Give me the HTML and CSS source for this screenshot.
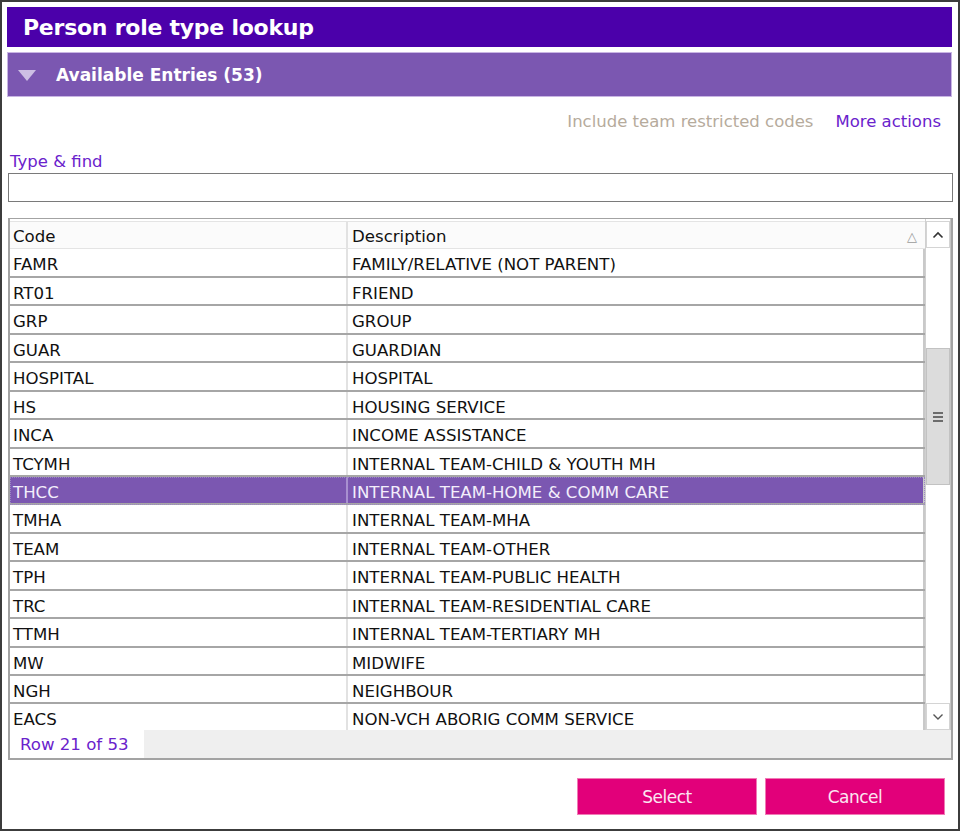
FILE: index.html
```html
<!DOCTYPE html>
<html lang="en">
<head>
  <meta charset="UTF-8" />
  <title>Person role type lookup</title>
  <link rel="stylesheet" href="styles.css">
</head>
<body>
  <div class="dialog">
    <h1 class="title">Person role type lookup</h1>

    <div class="section-head">
      <span class="caret"></span>
      <span>Available Entries (53)</span>
    </div>

    <div class="toolbar">
      <span class="muted">Include team restricted codes</span>
      <a class="link" href="#">More actions</a>
    </div>

    <label class="find-label" for="find">Type &amp; find</label>
    <input class="find-input" id="find" type="text" />

    <div class="grid">
      <div class="grid-main">
        <div class="grid-head">
          <div class="cell code">Code</div>
          <div class="cell desc">Description <span class="sort">&#9651;</span></div>
        </div>
        <div class="grid-body">
          <div class="row"><div class="cell code">FAMR</div><div class="cell desc">FAMILY/RELATIVE (NOT PARENT)</div></div>
          <div class="row"><div class="cell code">RT01</div><div class="cell desc">FRIEND</div></div>
          <div class="row"><div class="cell code">GRP</div><div class="cell desc">GROUP</div></div>
          <div class="row"><div class="cell code">GUAR</div><div class="cell desc">GUARDIAN</div></div>
          <div class="row"><div class="cell code">HOSPITAL</div><div class="cell desc">HOSPITAL</div></div>
          <div class="row"><div class="cell code">HS</div><div class="cell desc">HOUSING SERVICE</div></div>
          <div class="row"><div class="cell code">INCA</div><div class="cell desc">INCOME ASSISTANCE</div></div>
          <div class="row"><div class="cell code">TCYMH</div><div class="cell desc">INTERNAL TEAM-CHILD &amp; YOUTH MH</div></div>
          <div class="row selected"><div class="cell code">THCC</div><div class="cell desc">INTERNAL TEAM-HOME &amp; COMM CARE</div></div>
          <div class="row"><div class="cell code">TMHA</div><div class="cell desc">INTERNAL TEAM-MHA</div></div>
          <div class="row"><div class="cell code">TEAM</div><div class="cell desc">INTERNAL TEAM-OTHER</div></div>
          <div class="row"><div class="cell code">TPH</div><div class="cell desc">INTERNAL TEAM-PUBLIC HEALTH</div></div>
          <div class="row"><div class="cell code">TRC</div><div class="cell desc">INTERNAL TEAM-RESIDENTIAL CARE</div></div>
          <div class="row"><div class="cell code">TTMH</div><div class="cell desc">INTERNAL TEAM-TERTIARY MH</div></div>
          <div class="row"><div class="cell code">MW</div><div class="cell desc">MIDWIFE</div></div>
          <div class="row"><div class="cell code">NGH</div><div class="cell desc">NEIGHBOUR</div></div>
          <div class="row"><div class="cell code">EACS</div><div class="cell desc">NON-VCH ABORIG COMM SERVICE</div></div>
        </div>
      </div>
      <div class="scrollbar">
        <div class="sb-btn">
          <svg width="12" height="8" viewBox="0 0 12 8"><path d="M1.5 6.5 L6 2 L10.5 6.5" fill="none" stroke="#333" stroke-width="1.6"/></svg>
        </div>
        <div class="sb-track">
          <div class="sb-thumb"><span class="grip"></span></div>
        </div>
        <div class="sb-btn">
          <svg width="12" height="8" viewBox="0 0 12 8"><path d="M1.5 1.5 L6 6 L10.5 1.5" fill="none" stroke="#555" stroke-width="1.4"/></svg>
        </div>
      </div>
      <div class="grid-foot">
        <span class="row-count">Row 21 of 53</span>
      </div>
    </div>

    <div class="actions">
      <button class="btn">Select</button>
      <button class="btn">Cancel</button>
    </div>
  </div>
</body>
</html>
```

FILE: styles.css
```css
* {
  box-sizing: border-box;
}

body {
  margin: 0;
  padding: 0;
  font-family: "DejaVu Sans", Verdana, sans-serif;
  background: #fff;
  color: #111;
}

.dialog {
  width: 960px;
  height: 831px;
  border: 2px solid #3c3c3c;
  padding: 5px 6px 0 5px;
}

.title {
  margin: 0;
  height: 40px;
  background: #4b00aa;
  color: #fff;
  font-size: 22px;
  font-weight: bold;
  line-height: 38px;
  padding-top: 2px;
  padding-left: 16px;
  letter-spacing: -0.25px;
}

.section-head {
  margin-top: 5px;
  height: 45px;
  background: #7b57b1;
  border: 1px solid #c8b5e3;
  color: #fff;
  font-size: 17px;
  font-weight: bold;
  display: flex;
  align-items: center;
  padding-left: 10px;
  padding-top: 1px;
}

.caret {
  width: 0;
  height: 0;
  border-left: 9px solid transparent;
  border-right: 9px solid transparent;
  border-top: 11px solid #cdbfe4;
  margin-right: 20px;
}

.toolbar {
  margin-top: 15px;
  display: flex;
  justify-content: flex-end;
  gap: 22px;
  font-size: 16.5px;
  line-height: 20px;
  padding-right: 11px;
}

.muted {
  color: #b6ab9c;
}

.link {
  color: #6a22cc;
  text-decoration: none;
}

.find-label {
  display: block;
  margin-top: 20px;
  margin-left: 3px;
  color: #6a22cc;
  font-size: 16.5px;
  line-height: 20px;
}

.find-input {
  display: block;
  margin-left: 1px;
  width: 945px;
  height: 29px;
  border: 1px solid #7a7a7a;
  margin-top: 1px;
}

.grid {
  margin-top: 16px;
  margin-left: 1px;
  width: 945px;
  height: 542px;
  border: 2px solid #a3a3a3;
  border-top-width: 1px;
  display: grid;
  grid-template-columns: 915px 26px;
  grid-template-rows: 511px 28px;
  font-size: 16.6px;
}

.grid-main {
  overflow: hidden;
  padding-top: 2px;
}

.grid-head,
.row {
  display: flex;
  height: 28.44px;
}

.grid-head {
  background: #fbfbfb;
  border-bottom: 1px solid #e4e4e4;
  border-top: 1px solid #e4e4e4;
}

.cell {
  padding-left: 3px;
  line-height: 27px;
  white-space: nowrap;
}

.grid-head .cell {
  padding-top: 1px;
}

.cell.code {
  width: 338px;
  border-right: 2px solid #e2e2e2;
}

.cell.desc {
  flex: 1;
  padding-left: 4px;
  display: flex;
}

.sort {
  margin-left: auto;
  margin-right: 8px;
  color: #9a9a9a;
  font-size: 13px;
}

.row {
  border-bottom: 2px solid #a6a6a6;
}

.row .cell {
  line-height: 26px;
  padding-top: 3px;
}

.row .cell.desc {
  border-right: 2px solid #c9c9c9;
}

.row.selected {
  background: #7b57b1;
  color: #f3eefb;
  outline: 1px dotted #9c86c4;
  outline-offset: -1px;
}

.row.selected .cell.code {
  border-right-color: #a890d0;
}

.scrollbar {
  display: flex;
  flex-direction: column;
  border-left: 1px solid #d0d0d0;
  border-right: 1px solid #c4c4c4;
  padding-top: 2px;
}

.sb-btn {
  height: 27px;
  display: flex;
  align-items: center;
  justify-content: center;
  border: 1px solid #d4d4d4;
  background: #fff;
}

.sb-track {
  flex: 1;
  background: #fff;
  padding-top: 100px;
}

.sb-thumb {
  height: 137px;
  background: #dcdcdc;
  border: 1px solid #c2c2c2;
  display: flex;
  align-items: center;
  justify-content: center;
}

.grip {
  width: 10px;
  height: 10px;
  background: repeating-linear-gradient(#6c6c6c 0 2px, transparent 2px 4px);
}

.grid-foot {
  grid-column: 1 / 3;
  background: #efefef;
  display: flex;
}

.row-count {
  background: #fff;
  width: 134px;
  color: #6a22cc;
  padding-left: 10px;
  padding-top: 2px;
  line-height: 26px;
}

.actions {
  margin-top: 18px;
  display: flex;
  justify-content: flex-end;
  gap: 8px;
  padding-right: 7px;
}

.btn {
  width: 180px;
  height: 37px;
  background: #e2007a;
  border: 1px solid #f07ab5;
  color: #fbe6f1;
  font-family: "DejaVu Sans", Verdana, sans-serif;
  font-size: 17px;
  letter-spacing: -0.5px;
  cursor: pointer;
}
```
